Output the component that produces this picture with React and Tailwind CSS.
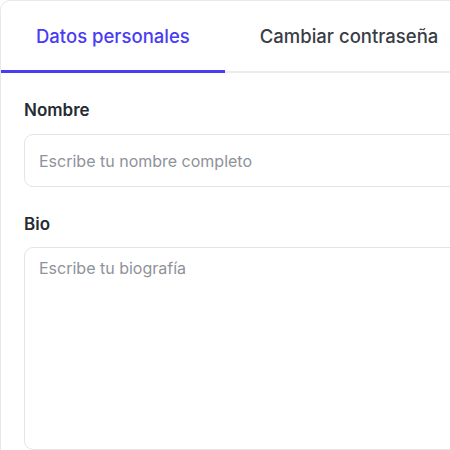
import React from 'react';

const tabs = ['Datos personales', 'Cambiar contraseña'];

const App = () => {
  const active = 0;

  return (
    <div className="h-[450px] w-[450px] overflow-hidden bg-white" style={{ fontFamily: 'Inter, "Noto Sans", sans-serif' }}>
      <div className="w-[520px] rounded-tl-[10px] border border-[#e8e8ea] bg-white">
        {/* Tabs */}
        <div className="flex border-b-2 border-[#ececee]">
          {tabs.map((tab, idx) => (
            <button
              key={idx}
              className={`-mb-[2px] h-[72px] border-b-[3px] px-[35px] text-[18.5px] leading-[24px] font-medium whitespace-nowrap ${
                idx === active ? 'border-[#4a3cf2] text-[#4a3cf2]' : 'border-transparent text-[#3a3d45]'
              }`}
            >
              {tab}
            </button>
          ))}
        </div>

        {/* Form */}
        <div className="px-[23px] pt-[27px]">
          <label className="block text-[17px] font-semibold leading-[20px] text-[#262b33]">Nombre</label>
          <input
            className="mt-[14px] h-[53px] w-full rounded-[9px] border border-[#e3e4e7] px-[14px] text-[16px] placeholder:text-[#8e929a] outline-none"
            placeholder="Escribe tu nombre completo"
          />

          <label className="mt-[27px] block text-[17px] font-semibold leading-[20px] text-[#262b33]">Bio</label>
          <textarea
            className="mt-[13px] h-[203px] w-full resize-none rounded-[9px] border border-[#e3e4e7] px-[14px] py-[8px] text-[16px] leading-[24px] placeholder:text-[#8e929a] outline-none"
            placeholder="Escribe tu biografía"
          />
        </div>
      </div>
    </div>
  );
};

export default App;
